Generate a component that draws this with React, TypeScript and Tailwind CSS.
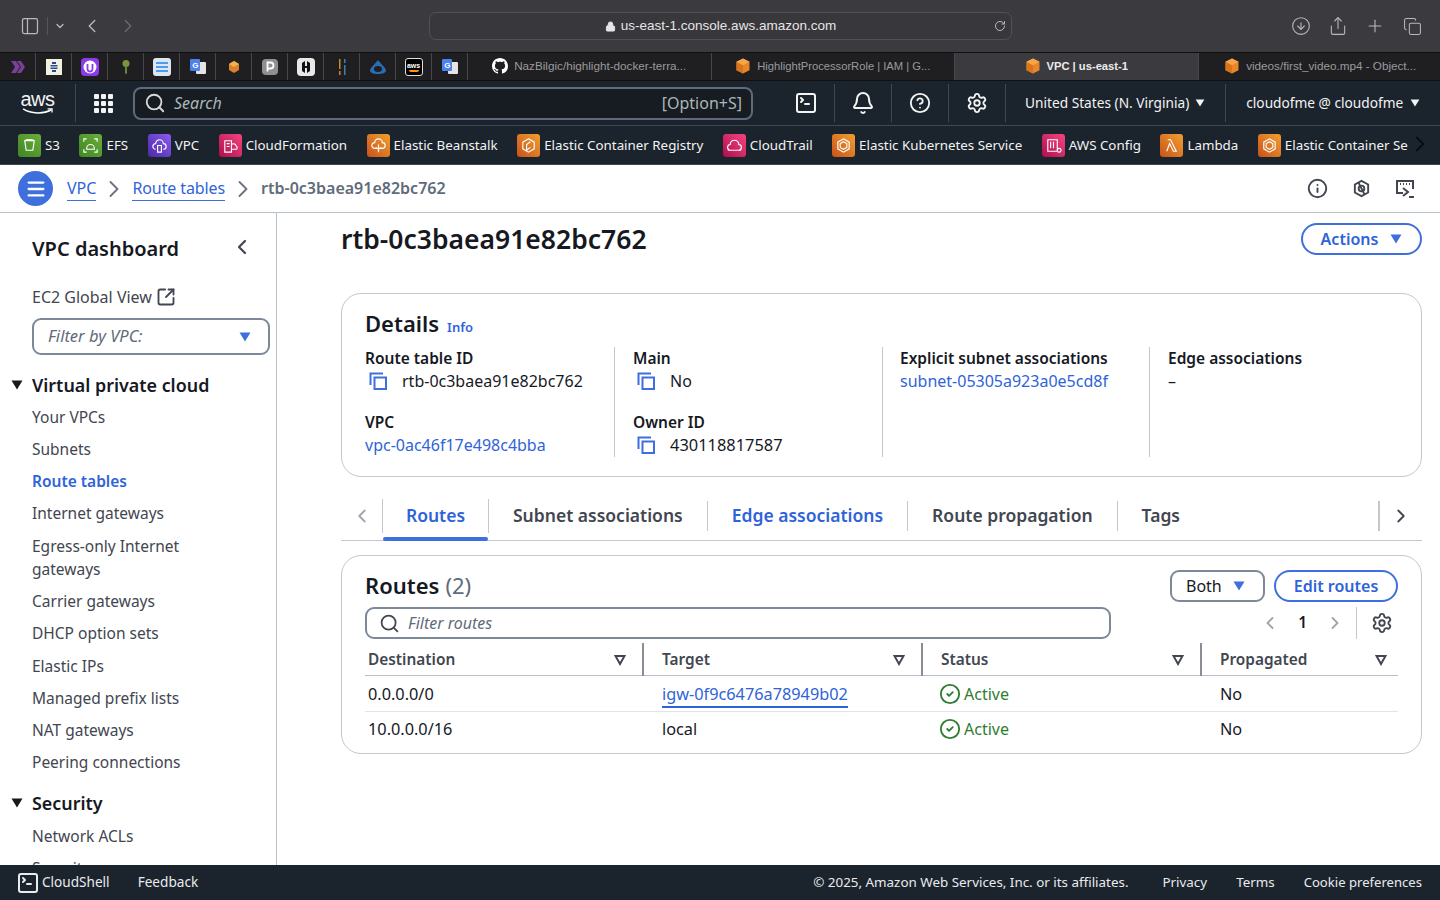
import React from "react";
import {
  Bell,
  ChevronDown,
  ChevronLeft,
  ChevronRight,
  CircleArrowDown,
  CircleCheck,
  CircleHelp,
  Info,
  Lock,
  Menu,
  PanelLeft,
  Plus,
  RotateCw,
  Search,
  Settings,
  Share,
  Copy,
  SquareArrowOutUpRight,
  SquareTerminal,
} from "lucide-react";

function Caret({ className = "" }: { className?: string }) {
  return (
    <svg viewBox="0 0 12 10" className={className} fill="currentColor">
      <path d="M0.5 0.5h11L6 9.5z" />
    </svg>
  );
}

function OutlineCaret() {
  return (
    <svg viewBox="0 0 12 12" className="h-3 w-3 text-[#424650]" fill="none" stroke="currentColor" strokeWidth="2">
      <path d="M1.5 2h9L6 10z" />
    </svg>
  );
}

function Cube({ className = "" }: { className?: string }) {
  return (
    <svg viewBox="0 0 16 16" className={className}>
      <path d="M8 0.5l6.5 3.2v8.6L8 15.5l-6.5-3.2V3.700z" fill="#e8862a" />
      <path d="M8 7.300v8.200l-6.500-3.200V3.700z" fill="#d9741b" />
      <path d="M8 0.500l6.500 3.200L8 7.300 1.500 3.700z" fill="#f5a54a" />
    </svg>
  );
}

function CopyIcon() {
  return (
    <svg viewBox="0 0 20 20" className="h-5 w-5 shrink-0 text-[#3f6fdc]" fill="none" stroke="currentColor" strokeWidth="2">
      <path d="M2.500 14V2.500H15" />
      <rect x="6.500" y="6.500" width="11.500" height="11.500" />
    </svg>
  );
}

function TranslateIcon() {
  return (
    <svg viewBox="0 0 16 16" className="h-4 w-4">
      <rect x="6" y="3" width="10" height="12" rx="1" fill="#e4e4e4" />
      <rect width="10" height="12" rx="1" fill="#4a82ee" />
      <text x="2.200" y="9" fontSize="8" fontWeight="700" fill="#fff" fontFamily="Liberation Sans">G</text>
    </svg>
  );
}

const favicons: React.ReactNode[] = [
  <svg viewBox="0 0 16 16" className="h-4 w-4"><path d="M1 2h5l4 6-4 6H1l4-6zM7 2h4l4 6-4 6H7l4-6z" fill="#7a3f97" /></svg>,
  <svg viewBox="0 0 16 16" className="h-4 w-4"><rect width="16" height="16" fill="#f3f0df" /><path d="M6 3h4v2H6zM4.500 6h7v1.500h-7zM4.500 8.500h7V10h-7zM6 11h4v2H6z" fill="#234a96" /></svg>,
  <svg viewBox="0 0 18 18" className="h-[18px] w-[18px]"><rect width="18" height="18" rx="4" fill="#8c3bea" /><circle cx="9" cy="9" r="6.500" fill="#fff" /><path d="M6.500 6v5a2.500 2.500 0 0 0 5 0V6" fill="none" stroke="#8c3bea" strokeWidth="1.800" /></svg>,
  <svg viewBox="0 0 16 16" className="h-4 w-4"><circle cx="8" cy="4.500" r="3.500" fill="#7b9440" /><path d="M7 7h2v7l-1 1.500L7 14z" fill="#6c8438" /></svg>,
  <svg viewBox="0 0 18 18" className="h-[18px] w-[18px]"><rect width="18" height="18" rx="3" fill="#dde5ee" /><path d="M3 4h12v2H3zM3 8h12v2H3zM3 12h12v2H3z" fill="#4a9cf0" /></svg>,
  <TranslateIcon />,
  <svg viewBox="0 0 16 16" className="h-4 w-4"><path d="M8 2l5 3v6l-5 3-5-3V5z" fill="#d9822b" /><path d="M8 2l5 3-5 3-5-3z" fill="#f2b14e" /></svg>,
  <svg viewBox="0 0 16 16" className="h-4 w-4"><rect width="16" height="16" rx="4" fill="#8e8e93" /><path d="M5.500 12.500v-9h3a3 3 0 0 1 0 6h-3" fill="none" stroke="#fff" strokeWidth="1.800" /></svg>,
  <svg viewBox="0 0 18 18" className="h-[18px] w-[18px]"><rect width="18" height="18" rx="4" fill="#e8e8e8" /><path d="M5 5l3-2v12l-3-2zM13 5l-3-2v12l3-2zM8 8h2v2H8z" fill="#111" /></svg>,
  <svg viewBox="0 0 16 18" className="h-[18px] w-4"><path d="M5 1h1.500v10H5zM5 13h1.500v4H5z" fill="#c98a2e" /><path d="M10 1h1.500v4H10zM10 7h1.500v10H10z" fill="#3d7fb0" /></svg>,
  <svg viewBox="0 0 18 16" className="h-4 w-[18px]"><path d="M9 1c2 3 8 8 8 10.500 0 2-3 3.500-8 3.500s-8-1.500-8-3.500C1 9 7 4 9 1z" fill="#2a6db0" /><ellipse cx="9" cy="10" rx="4" ry="3" fill="#1f1f21" /></svg>,
  <span className="flex h-[18px] w-[18px] flex-col items-center justify-center rounded-[3px] border border-[#ddd] bg-black font-['Liberation_Sans',sans-serif] text-[7px] font-bold leading-[8px] text-white">
    aws
    <span className="h-[2px] w-2.5 rounded-b-full bg-[#f90]" />
  </span>,
  <TranslateIcon />,
];

const tabs = [
  { title: "NazBilgic/highlight-docker-terra...", github: true, size: "text-[11.700px] text-[#9a9a9d]" },
  { title: "HighlightProcessorRole | IAM | G...", size: "text-[11.200px] text-[#9a9a9d]" },
  { title: "VPC | us-east-1", active: true, size: "text-[11.200px] font-bold text-[#ececec]" },
  { title: "videos/first_video.mp4 - Object...", size: "text-[11.700px] text-[#9a9a9d]" },
];

const services = [
  { name: "S3", color: "from-[#3f8624] to-[#6aae3a]", glyph: "M5 5h10l-1.500 10h-7zM5 5c2-1.500 8-1.500 10 0" },
  { name: "EFS", color: "from-[#3f8624] to-[#6aae3a]", glyph: "M3 6V3h3M14 3h3v3M3 14v3h3M17 14v3h-3M6 13a4 4 0 0 1 8 0v1H6z" },
  { name: "VPC", color: "from-[#4d27a8] to-[#8c5cf0]", glyph: "M6 14a3 3 0 0 1 0-6 4 4 0 0 1 8 0 3 3 0 0 1 0 6M8 10h4v7H8z" },
  { name: "CloudFormation", color: "from-[#b0084d] to-[#f34482]", glyph: "M4 5h7v12H4zM6 8h3M6 11h3M11 9a3 3 0 0 1 5 1.500 2 2 0 0 1 0 3.500h-5" },
  { name: "Elastic Beanstalk", color: "from-[#c8511b] to-[#f0a030]", glyph: "M6 13a3 3 0 0 1 0-6 4 4 0 0 1 8 0 3 3 0 0 1 0 6zM10 9v8M7 12l3 2 3-2" },
  { name: "Elastic Container Registry", color: "from-[#c8511b] to-[#f0a030]", glyph: "M10 3l6 3.500v7L10 17l-6-3.500v-7zM8 15V9l4-3M12 12l-4 3" },
  { name: "CloudTrail", color: "from-[#b0084d] to-[#f34482]", glyph: "M6 15a3 3 0 0 1-.5-6 4.500 4.500 0 0 1 9 0 3 3 0 0 1-.5 6zM3 15h14" },
  { name: "Elastic Kubernetes Service", color: "from-[#c8511b] to-[#f0a030]", glyph: "M10 3l6 3.500v7L10 17l-6-3.500v-7zM10 6l3.500 2v4L10 14l-3.500-2V8z" },
  { name: "AWS Config", color: "from-[#b0084d] to-[#f34482]", glyph: "M4 4h10v12H4zM7 6v7M10 6v7M16 13a2 2 0 1 1-.1 0" },
  { name: "Lambda", color: "from-[#c8511b] to-[#f0a030]", glyph: "M6 4h3l6 12h-3L8 8l-3 8" },
  { name: "Elastic Container Service", color: "from-[#c8511b] to-[#f0a030]", glyph: "M10 3l6 3.500v7L10 17l-6-3.500v-7zM10 6l3.500 2v4L10 14l-3.500-2V8z" },
];

const vpcLinks = [
  ["Your VPCs"],
  ["Subnets"],
  ["Route tables", true],
  ["Internet gateways"],
  ["Egress-only Internet gateways"],
  ["Carrier gateways"],
  ["DHCP option sets"],
  ["Elastic IPs"],
  ["Managed prefix lists"],
  ["NAT gateways"],
  ["Peering connections"],
] as const;

function DetailField({
  label,
  value,
  copy,
  link,
  wide,
}: {
  label: string;
  value: string;
  copy?: boolean;
  link?: boolean;
  wide?: boolean;
}) {
  return (
    <div>
      <div className="text-[15.500px] font-semibold leading-[23px] text-[#16191f]">{label}</div>
      <div className={`flex h-[22px] items-center gap-[14px] ${wide ? "text-[16.400px]" : "text-[16px]"} ${link ? "text-[#2f63d9]" : "text-[#16191f]"}`}>
        {copy && <span className="ml-[3px]"><CopyIcon /></span>}
        {value}
      </div>
    </div>
  );
}

function SortHead({ label, width, last }: { label: string; width: string; last?: boolean }) {
  return (
    <div className={`my-[5px] flex h-[33px] items-center justify-between first:pl-[3px] ${width} ${last ? "pl-[18px] pr-[11px]" : "border-r-2 border-[#8c8c94] pl-[18px] pr-[16px]"}`}>
      <span className="text-[15.400px] font-semibold text-[#424650]">{label}</span>
      <OutlineCaret />
    </div>
  );
}

function RouteRow({ dest, target, link, last }: { dest: string; target: string; link?: boolean; last?: boolean }) {
  return (
    <div className={`flex h-[36px] items-center text-[16.300px] text-[#16191f] ${last ? "pb-[2px]" : "border-b border-[#e3e3e8] pt-[1px]"}`}>
      <div className="w-[278px] pl-[3px]">{dest}</div>
      <div className="w-[279px] pl-[19px]">
        {link ? <span className="border-b-2 border-[#2f63d9] pb-[1px] text-[#2f63d9]">{target}</span> : target}
      </div>
      <div className="flex w-[279px] items-center gap-[3px] pl-[17px] text-[16px] text-[#2f7d32]">
        <CircleCheck className="h-[22px] w-[22px]" strokeWidth={2} />
        Active
      </div>
      <div className="pl-[19px]">No</div>
    </div>
  );
}

export default function App() {
  return (
    <div className="flex h-[900px] w-[1440px] flex-col overflow-hidden bg-white font-['Noto_Sans',sans-serif]">
      {/* browser toolbar */}
      <div className="flex h-[52px] items-center bg-[#3b3a3f] pl-[20px] pr-[18px] text-[#b9b9bc]">
        <PanelLeft className="h-[20px] w-[20px]" strokeWidth={1.500} />
        <span className="ml-[7px] h-[18px] w-px bg-[#55555a]" />
        <ChevronDown className="ml-[6px] h-3 w-3" strokeWidth={2.500} />
        <ChevronLeft className="ml-[15px] h-[22px] w-[22px]" strokeWidth={1.500} />
        <ChevronRight className="ml-[14px] h-[22px] w-[22px] text-[#6b6b70]" strokeWidth={1.500} />
        <div className="relative ml-[290px] flex h-[28px] w-[583px] items-center justify-center rounded-[7px] border border-[#515156] bg-[#38373c] font-['Liberation_Sans',sans-serif] text-[13.500px] text-[#e6e6e6]">
          <Lock className="mr-[5px] h-[11px] w-[11px] fill-[#e6e6e6]" />
          us-east-1.console.aws.amazon.com
          <RotateCw className="absolute right-[5px] top-[7px] h-3 w-3 text-[#b9b9bc]" />
        </div>
        <div className="ml-auto flex items-center gap-[17px]">
          <CircleArrowDown className="h-[20px] w-[20px]" strokeWidth={1.300} />
          <Share className="h-[20px] w-[20px]" strokeWidth={1.300} />
          <Plus className="h-[20px] w-[20px]" strokeWidth={1.300} />
          <Copy className="ml-[1px] h-[19px] w-[19px]" strokeWidth={1.300} />
        </div>
      </div>

      {/* tab strip */}
      <div className="flex h-[29px] overflow-hidden border-y border-[#101012] bg-[#1f1f21] font-['Liberation_Sans',sans-serif]">
        {favicons.map((icon, i) => (
          <div key={i} className="flex w-[36px] shrink-0 items-center justify-center border-r border-[#48484c]">
            {icon}
          </div>
        ))}
        {tabs.map((tab) => (
          <div
            key={tab.title}
            className={`flex w-[243.500px] shrink-0 items-center justify-center gap-[6px] border-r border-[#48484c] pb-[1px] last:border-r-0 ${tab.size} ${
              tab.active ? "bg-[#3b3a3f]" : ""
            }`}
          >
            {tab.github ? (
              <svg viewBox="0 0 16 16" className="h-[16px] w-[16px]" fill="#fff">
                <path d="M8 0C3.580 0 0 3.580 0 8c0 3.540 2.290 6.530 5.470 7.590.4.070.55-.17.55-.38 0-.19-.010-.82-.010-1.490-2.010.370-2.530-.490-2.690-.940-.090-.230-.480-.940-.820-1.130-.280-.150-.680-.520-.010-.530.630-.010 1.080.580 1.230.820.720 1.210 1.870.870 2.330.660.070-.520.280-.870.510-1.070-1.780-.200-3.640-.890-3.640-3.950 0-.870.310-1.590.820-2.150-.080-.200-.360-1.020.080-2.120 0 0 .670-.210 2.200.820.640-.180 1.320-.270 2-.270s1.360.090 2 .270c1.530-1.040 2.200-.820 2.200-.820.440 1.100.160 1.920.080 2.120.510.560.820 1.270.820 2.150 0 3.070-1.870 3.750-3.650 3.950.290.250.540.730.540 1.480 0 1.070-.010 1.930-.010 2.200 0 .210.150.460.550.380A8.010 8.010 0 0 0 16 8c0-4.420-3.580-8-8-8z" />
              </svg>
            ) : (
              <Cube className="h-[16px] w-[16px]" />
            )}
            {tab.title}
          </div>
        ))}
      </div>

      {/* aws nav */}
      <div className="flex h-[45px] items-center border-b border-[#414750] bg-[#1b232d] text-[#f2f3f3]">
        <div className="ml-[19px] flex w-[37px] flex-col items-center">
          <span className="font-['Liberation_Sans',sans-serif] text-[20px] leading-[17px] tracking-[-0.500px]">aws</span>
          <svg viewBox="0 0 36 8" className="h-[7px] w-[36px]" fill="none">
            <path d="M1 1c9 6 24 6 32 1" stroke="#fff" strokeWidth="1.800" />
            <path d="M29 1h5v4" stroke="#fff" strokeWidth="1.500" />
          </svg>
        </div>
        <span className="ml-[19px] h-[38px] w-px bg-[#414750]" />
        <div className="ml-[18px] grid grid-cols-3 gap-[2px]">
          {Array.from({ length: 9 }).map((_, i) => (
            <span key={i} className="h-[5px] w-[5px] rounded-[1px] bg-[#f2f3f3]" />
          ))}
        </div>
        <div className="ml-[20px] flex h-[33px] w-[620px] items-center rounded-[8px] border-2 border-[#5f6b7a] bg-[#171b22] pl-[9px] pr-[9px]">
          <Search className="h-[22px] w-[22px] text-[#d5dbdb]" strokeWidth={2} />
          <span className="ml-[8px] text-[16px] italic text-[#aab7b8]">Search</span>
          <span className="ml-auto text-[16px] text-[#aab7b8]">[Option+S]</span>
        </div>
        <SquareTerminal className="ml-[41px] h-[24px] w-[24px]" strokeWidth={2} />
        <span className="ml-[16px] h-[38px] w-px bg-[#414750]" />
        <Bell className="ml-[16px] h-[24px] w-[24px]" strokeWidth={2} />
        <span className="ml-[16px] h-[38px] w-px bg-[#414750]" />
        <CircleHelp className="ml-[17px] h-[22px] w-[22px]" strokeWidth={2} />
        <span className="ml-[17px] h-[38px] w-px bg-[#414750]" />
        <Settings className="ml-[17px] h-[22px] w-[22px]" strokeWidth={2} />
        <span className="ml-[17px] h-[38px] w-px bg-[#414750]" />
        <span className="ml-[19px] text-[13.700px]">United States (N. Virginia)</span>
        <Caret className="ml-[6px] h-[8px] w-[10px]" />
        <span className="ml-[20px] h-[38px] w-px bg-[#414750]" />
        <span className="ml-[20px] text-[13.700px]">cloudofme @ cloudofme</span>
        <Caret className="ml-[7px] h-[8px] w-[10px]" />
      </div>

      {/* favourites */}
      <div className="relative flex h-[39px] items-center overflow-hidden border-b border-[#414750] bg-[#1b232d] pl-[18px] text-[#f2f3f3]">
        <div className="flex w-[1390px] items-center gap-[19.500px] overflow-hidden">
          {services.map((s) => (
            <div key={s.name} className="flex shrink-0 items-center gap-[4px] text-[13.350px]">
              <span className={`flex h-[23px] w-[23px] items-center justify-center rounded-[3px] bg-gradient-to-tr ${s.color}`}>
                <svg viewBox="0 0 20 20" className="h-[19px] w-[19px]" fill="none" stroke="#fff" strokeWidth="1.200">
                  <path d={s.glyph} />
                </svg>
              </span>
              {s.name}
            </div>
          ))}
        </div>
        <ChevronRight className="absolute right-[7px] top-[5px] h-[26px] w-[26px] text-[#05070a]" strokeWidth={1.500} />
      </div>

      {/* breadcrumb */}
      <div className="flex h-[48px] items-center border-b border-[#b6bec9] bg-white pl-[18px] pr-[25px] text-[16px]">
        <span className="flex h-[35px] w-[35px] items-center justify-center rounded-full bg-[#3f6fdc]">
          <Menu className="h-[22px] w-[22px] text-white" strokeWidth={2.500} />
        </span>
        <span className="ml-[14px] border-b border-[#3f6fdc] text-[#2f63d9]">VPC</span>
        <ChevronRight className="mx-[4px] h-[28px] w-[28px] text-[#6b7280]" strokeWidth={1.600} />
        <span className="border-b border-[#3f6fdc] tracking-[-0.100px] text-[#2f63d9]">Route tables</span>
        <ChevronRight className="mx-[4px] h-[28px] w-[28px] text-[#6b7280]" strokeWidth={1.600} />
        <span className="pb-[2px] font-semibold text-[#5f6b7a]">rtb-0c3baea91e82bc762</span>
        <div className="ml-auto flex items-center gap-[24px] text-[#424650]">
          <Info className="h-[21px] w-[21px]" strokeWidth={2.200} />
          <svg viewBox="0 0 20 20" className="h-[19px] w-[19px]" fill="none" stroke="currentColor" strokeWidth="2">
            <path d="M10 2l7 3.800v8.400L10 18l-7-3.800V5.800z" />
            <circle cx="10" cy="10" r="3" />
            <path d="M7 4l6 12" />
          </svg>
          <svg viewBox="0 0 20 20" className="h-[20px] w-[20px]" fill="none" stroke="currentColor" strokeWidth="2">
            <path d="M8 14H2V2h16v8" />
            <path d="M5 5h1M8 5h1M11 5h1M14 5h1" />
            <path d="M8 9l5 4-5 4M14 18h5" />
          </svg>
        </div>
      </div>

      {/* body */}
      <div className="flex min-h-0 flex-1">
        {/* side nav */}
        <aside className="w-[277px] shrink-0 overflow-hidden border-r border-[#b6bec9] pl-[32px] pr-[7px]">
          <div className="flex h-[72px] items-center justify-between pr-[15px]">
            <span className="text-[20px] font-semibold leading-none text-[#16191f]">VPC dashboard</span>
            <ChevronLeft className="mb-[4px] h-[24px] w-[24px] text-[#424650]" strokeWidth={2.200} />
          </div>
          <div className="flex h-[24px] items-center gap-[4px] text-[16px] text-[#424650]">
            EC2 Global View
            <SquareArrowOutUpRight className="h-[20px] w-[20px]" strokeWidth={2.200} />
          </div>
          <div className="mt-[9px] flex h-[37px] w-[238px] items-center justify-between rounded-[9px] border-2 border-[#7d8998] pl-[14px] pr-[17px] text-[16.500px] italic text-[#5f6b7a]">
            Filter by VPC:
            <Caret className="h-[10px] w-[12px] text-[#3f6fdc]" />
          </div>
          <div className="relative mt-[17px] flex h-[26px] items-center text-[17.900px] font-semibold text-[#16191f]">
            <Caret className="absolute left-[-21px] top-[8px] h-[10px] w-[12px]" />
            Virtual private cloud
          </div>
          <div className="mt-[3px] text-[15.500px] text-[#424650]">
            {vpcLinks.map(([label, active]) => (
              <div
                key={label}
                className={`w-[190px] py-[4.650px] leading-[23px] ${active ? "font-semibold text-[#2f63d9]" : ""}`}
              >
                {label}
              </div>
            ))}
          </div>
          <div className="relative mt-[11px] flex h-[26px] items-center text-[17.900px] font-semibold text-[#16191f]">
            <Caret className="absolute left-[-21px] top-[8px] h-[10px] w-[12px]" />
            Security
          </div>
          <div className="mt-[4px] text-[15.500px] text-[#424650]">
            <div className="py-[4.650px] leading-[23px]">Network ACLs</div>
            <div className="py-[4.650px] leading-[23px]">Security groups</div>
          </div>
        </aside>

        {/* main */}
        <main className="min-w-0 flex-1 overflow-hidden pl-[64px] pr-[18px]">
          <div className="flex h-[52px] items-center justify-between">
            <h1 className="pt-[2px] text-[26.500px] font-semibold text-[#16191f]">rtb-0c3baea91e82bc762</h1>
            <div className="flex h-[32px] w-[121px] items-center justify-center gap-[12px] rounded-full border-2 border-[#3f6fdc] text-[16px] font-semibold text-[#2f63d9]">
              Actions
              <Caret className="h-[10px] w-[12px] text-[#3f6fdc]" />
            </div>
          </div>

          <section className="mt-[28px] h-[184px] rounded-[20px] border border-[#c6c6cd] px-[23px] pt-[13px]">
            <div className="flex h-[40px] items-baseline gap-[8px]">
              <span className="text-[22px] font-semibold text-[#16191f]">Details</span>
              <span className="text-[13px] font-semibold text-[#2f63d9]">Info</span>
            </div>
            <div className="flex">
              <div className="flex h-[110px] w-[250px] flex-col gap-[19px] border-r border-[#c6c6cd]">
                <DetailField label="Route table ID" value="rtb-0c3baea91e82bc762" copy />
                <DetailField label="VPC" value="vpc-0ac46f17e498c4bba" link />
              </div>
              <div className="flex h-[110px] w-[268px] flex-col gap-[19px] border-r border-[#c6c6cd] pl-[18px]">
                <DetailField label="Main" value="No" copy />
                <DetailField label="Owner ID" value="430118817587" copy wide />
              </div>
              <div className="flex h-[110px] w-[267px] flex-col border-r border-[#c6c6cd] pl-[17px]">
                <DetailField label="Explicit subnet associations" value="subnet-05305a923a0e5cd8f" link />
              </div>
              <div className="flex h-[110px] flex-col pl-[18px]">
                <DetailField label="Edge associations" value="–" />
              </div>
            </div>
          </section>

          {/* tabs */}
          <div className="mt-[18px] flex h-[46px] items-center border-b border-[#c6c6cd] pb-[4px] text-[17.500px] font-semibold text-[#424650]">
            <ChevronLeft className="ml-[10px] h-[22px] w-[22px] text-[#a0a5ad]" strokeWidth={2} />
            <span className="relative ml-[9px] flex h-[34px] w-[107px] items-center justify-center border-x border-[#c6c6cd] text-[#2f63d9]">
              Routes
              <span className="absolute bottom-[-8px] left-0 right-0 h-[4px] rounded-full bg-[#3f6fdc]" />
            </span>
            <span className="flex h-[30px] items-center border-r border-[#c6c6cd] px-[24px]">Subnet associations</span>
            <span className="flex h-[30px] items-center border-r border-[#c6c6cd] px-[24px] text-[#2f63d9]">Edge associations</span>
            <span className="flex h-[30px] items-center border-r border-[#c6c6cd] px-[24px]">Route propagation</span>
            <span className="px-[24px]">Tags</span>
            <span className="ml-auto h-[30px] w-[2px] bg-[#c6c6cd]" />
            <ChevronRight className="mx-[10px] h-[22px] w-[22px] text-[#424650]" strokeWidth={2} />
          </div>

          {/* routes */}
          <section className="mt-[14px] h-[199px] rounded-[20px] border border-[#c6c6cd] px-[23px]">
            <div className="flex h-[51px] items-start justify-between pt-[14px]">
              <div className="flex h-[32px] items-center gap-[6px] pb-[2px] text-[22px] font-semibold leading-none text-[#16191f]">
                Routes <span className="font-normal text-[#5f6b7a]">(2)</span>
              </div>
              <div className="flex items-center gap-[9px] text-[16px]">
                <div className="flex h-[32px] w-[95px] items-center justify-between rounded-[9px] border-2 border-[#7d8998] pb-[1px] pl-[14px] pr-[18px] text-[#16191f]">
                  Both
                  <Caret className="h-[10px] w-[12px] text-[#3f6fdc]" />
                </div>
                <div className="flex h-[32px] w-[124px] items-center justify-center rounded-full border-2 border-[#3f6fdc] pb-[1px] font-semibold text-[#2f63d9]">
                  Edit routes
                </div>
              </div>
            </div>
            <div className="flex h-[32px] items-center">
              <div className="flex h-[32px] w-[746px] items-center rounded-[9px] border-2 border-[#7d8998] pl-[12px] text-[16px] italic text-[#5f6b7a]">
                <Search className="h-[21px] w-[21px] text-[#424650]" strokeWidth={2} />
                <span className="ml-[8px]">Filter routes</span>
              </div>
              <div className="ml-auto flex h-[32px] items-center text-[#16191f]">
                <ChevronLeft className="h-[20px] w-[20px] text-[#a0a5ad]" strokeWidth={2.200} />
                <span className="mx-[18px] text-[15.500px] font-semibold">1</span>
                <ChevronRight className="h-[20px] w-[20px] text-[#a0a5ad]" strokeWidth={2.200} />
                <span className="ml-[11px] h-[32px] w-px bg-[#c6c6cd]" />
                <Settings className="ml-[14px] mr-[5px] h-[22px] w-[22px] text-[#424650]" strokeWidth={2} />
              </div>
            </div>
            <div className="mt-[5px] flex h-[32px] items-center border-b border-[#b6bec9]">
              <SortHead label="Destination" width="w-[279px]" />
              <SortHead label="Target" width="w-[279px]" />
              <SortHead label="Status" width="w-[279px]" />
              <SortHead label="Propagated" width="flex-1" last />
            </div>
            <RouteRow dest="0.0.0.0/0" target="igw-0f9c6476a78949b02" link />
            <RouteRow dest="10.0.0.0/16" target="local" last />
          </section>
        </main>
      </div>

      {/* footer */}
      <div className="flex h-[35px] shrink-0 items-center bg-[#1b232d] pl-[16px] pr-[18px] text-[13.400px] text-[#e9ebed]">
        <SquareTerminal className="h-[24px] w-[24px]" strokeWidth={2} />
        <span className="ml-[2px] text-[13.600px]">CloudShell</span>
        <span className="ml-[28px] text-[13.600px]">Feedback</span>
        <span className="ml-auto">© 2025, Amazon Web Services, Inc. or its affiliates.</span>
        <span className="ml-[34px]">Privacy</span>
        <span className="ml-[29px]">Terms</span>
        <span className="ml-[29px] text-[13.100px]">Cookie preferences</span>
      </div>
    </div>
  );
}
